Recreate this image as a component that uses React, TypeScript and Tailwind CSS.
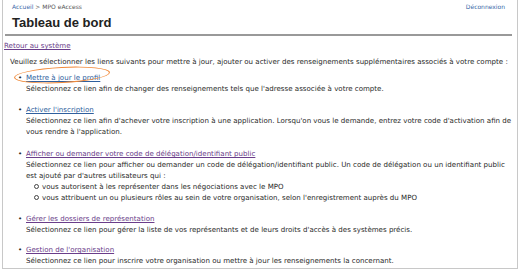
import React from 'react';

const body = "font-['DejaVu_Sans',Verdana,sans-serif]";

type Item = {
  label: string;
  visited?: boolean;
  circled?: boolean;
  lines: React.ReactNode;
  gapAfter: string;
};

function Circle() {
  return (
    <span className="w-[8px] shrink-0 flex items-center h-[11px]">
      <span className="w-[5px] h-[5px] rounded-full border-[0.8px] border-[#444]" />
    </span>
  );
}

const items: Item[] = [
  {
    label: 'Mettre à jour le profil',
    circled: true,
    lines: (
      <p>Sélectionnez ce lien afin de changer des renseignements tels que l'adresse associée à votre compte.</p>
    ),
    gapAfter: 'mb-[10px]',
  },
  {
    label: "Activer l'inscription",
    lines: (
      <p>
        Sélectionnez ce lien afin d'achever votre inscription à une application. Lorsqu'on vous le demande, entrez votre code d'activation afin de
        <br />
        vous rendre à l'application.
      </p>
    ),
    gapAfter: 'mb-[11px]',
  },
  {
    label: 'Afficher ou demander votre code de délégation/identifiant public',
    visited: true,
    lines: (
      <>
        <p>
          Sélectionnez ce lien pour afficher ou demander un code de délégation/identifiant public. Un code de délégation ou un identifiant public
          <br />
          est ajouté par d'autres utilisateurs qui :
        </p>
        <ul className="pl-[8px]">
          <li className="flex">
            <Circle />
            vous autorisent à les représenter dans les négociations avec le MPO
          </li>
          <li className="flex">
            <Circle />
            vous attribuent un ou plusieurs rôles au sein de votre organisation, selon l'enregistrement auprès du MPO
          </li>
        </ul>
      </>
    ),
    gapAfter: 'mb-[10px]',
  },
  {
    label: 'Gérer les dossiers de représentation',
    visited: true,
    lines: <p>Sélectionnez ce lien pour gérer la liste de vos représentants et de leurs droits d'accès à des systèmes précis.</p>,
    gapAfter: 'mb-[9px]',
  },
  {
    label: "Gestion de l'organisation",
    visited: true,
    lines: <p>Sélectionnez ce lien pour inscrire votre organisation ou mettre à jour les renseignements la concernant.</p>,
    gapAfter: '',
  },
];

export default function App() {
  return (
    <div className="w-[520px] h-[272px] bg-white overflow-hidden">
      <div className={`ml-[2px] w-[516px] h-[269px] border-x border-b border-[#c8c8c8] ${body} text-[7.07px] leading-[11px] text-[#2a2a2a]`}>
        <div className="pl-[2px] pr-[5px]">
          <div className="flex justify-between px-[7px] pt-[2px] text-[6px] leading-[10px]">
            <span className="text-[#555]">
              <a className="text-[#3a6aa8]">Accueil</a> &gt; MPO eAccess
            </span>
            <a className="text-[#3a6aa8]">Déconnexion</a>
          </div>
          <h1 className="px-[7px] pt-[3px] pb-[3px] border-b-2 border-[#999] font-['Liberation_Sans',Arial,sans-serif] font-bold text-[13px] leading-[16px] text-[#222]">
            Tableau de bord
          </h1>
        </div>
        <div className="pl-px pt-[4px]">
          <a className="text-[#6a3d8a] underline">Retour au système</a>
        </div>
        <div className="pl-[7px] pt-[5px]">
          <p>Veuillez sélectionner les liens suivants pour mettre à jour, ajouter ou activer des renseignements supplémentaires associés à votre compte :</p>
          <ul className="mt-[5px] pl-[8px]">
            {items.map((it) => (
              <li key={it.label} className={`flex ${it.gapAfter}`}>
                <span className="w-[8px] shrink-0">•</span>
                <div>
                  <div className="relative">
                    <a className={`underline ${it.visited ? 'text-[#6a3d8a]' : 'text-[#2f5f9e]'}`}>{it.label}</a>
                    {it.circled && (
                      <span className="absolute left-[-12px] top-[-5px] w-[96px] h-[16px] rounded-[50%] border-[1.5px] border-[#f08a3a] -rotate-3" />
                    )}
                  </div>
                  {it.lines}
                </div>
              </li>
            ))}
          </ul>
        </div>
      </div>
    </div>
  );
}
